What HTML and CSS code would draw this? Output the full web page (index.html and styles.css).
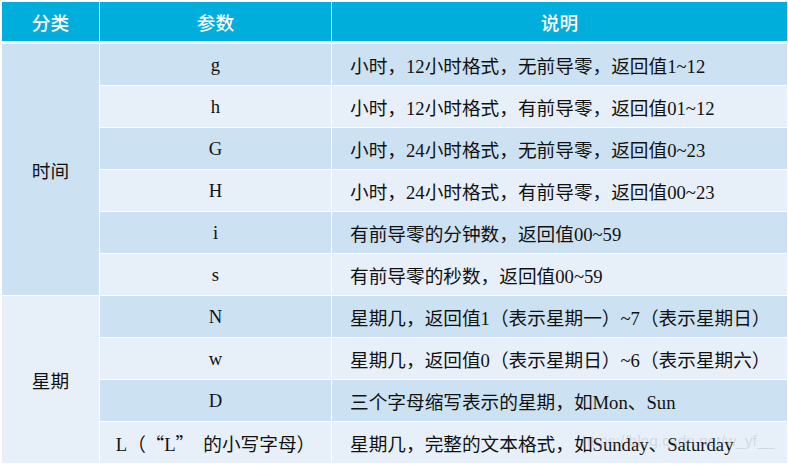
FILE: index.html
```html
<!DOCTYPE html>
<html lang="zh">
<head>
<meta charset="utf-8">
<link rel="stylesheet" href="styles.css">
</head>
<body>
<div class="wrap">
  <div class="head">
    <div class="hc">分类</div>
    <div class="hc">参数</div>
    <div class="hc">说明</div>
  </div>
  <div class="body">
    <div class="cat dark span6">时间</div>
    <div class="p dark">g</div><div class="d dark">小时，12小时格式，无前导零，返回值1~12</div>
    <div class="p light">h</div><div class="d light">小时，12小时格式，有前导零，返回值01~12</div>
    <div class="p dark">G</div><div class="d dark">小时，24小时格式，无前导零，返回值0~23</div>
    <div class="p light">H</div><div class="d light">小时，24小时格式，有前导零，返回值00~23</div>
    <div class="p dark">i</div><div class="d dark">有前导零的分钟数，返回值00~59</div>
    <div class="p light">s</div><div class="d light">有前导零的秒数，返回值00~59</div>
    <div class="cat light span4">星期</div>
    <div class="p dark">N</div><div class="d dark">星期几，返回值1（表示星期一）~7（表示星期日）</div>
    <div class="p light">w</div><div class="d light">星期几，返回值0（表示星期日）~6（表示星期六）</div>
    <div class="p dark">D</div><div class="d dark">三个字母缩写表示的星期，如Mon、Sun</div>
    <div class="p light"><span>L（<span class="q-open">“</span>L<span class="q-close">”</span>的小写字母）</span></div><div class="d light">星期几，完整的文本格式，如Sunday、Saturday</div>
  </div>
  <div class="watermark">https://blog.csdn.net/w_yf__</div>
</div>
</body>
</html>
```
FILE: styles.css
```css
html, body {
  margin: 0;
  padding: 0;
  background: #ffffff;
}
body {
  padding: 2px 1px 0 2px;
  font-family: "Liberation Serif", "Noto Sans CJK SC", serif;
  font-size: 18.67px;
  color: #111;
}
.wrap {
  position: relative;
  width: 785px;
}
.head {
  display: grid;
  grid-template-columns: 97px 231px 1fr;
  column-gap: 1px;
  height: 39px;
  background: #ffffff;
}
.hc {
  background: #00aedc;
  color: #ffffff;
  font-family: "Noto Sans CJK SC", sans-serif;
  font-weight: 500;
  font-size: 18.67px;
  display: flex;
  align-items: center;
  justify-content: center;
}
.body {
  margin-top: 3px;
  display: grid;
  grid-template-columns: 97px 231px 1fr;
  grid-auto-rows: 41px;
  column-gap: 1px;
  row-gap: 1px;
}
.dark { background: #cce2f2; }
.light { background: #e7f0f9; }
.cat {
  grid-column: 1;
  display: flex;
  align-items: center;
  justify-content: center;
  font-family: "Noto Sans CJK SC", sans-serif;
  font-size: 18.67px;
}
.span6 { grid-row: span 6; }
.span4 { grid-row: span 4; }
.p {
  grid-column: 2;
  display: flex;
  align-items: center;
  justify-content: center;
  white-space: nowrap;
}
.q-open {
  font-family: "Noto Sans CJK SC", sans-serif;
  padding-left: 9px;
}
.q-close {
  font-family: "Noto Sans CJK SC", sans-serif;
  padding-right: 9px;
}
.d {
  grid-column: 3;
  display: flex;
  align-items: center;
  padding-left: 18px;
  white-space: nowrap;
}
.watermark {
  position: absolute;
  left: 580px;
  top: 430px;
  font-family: "Liberation Sans", sans-serif;
  font-size: 15.5px;
  color: rgba(150, 160, 170, 0.3);
  pointer-events: none;
}
```
